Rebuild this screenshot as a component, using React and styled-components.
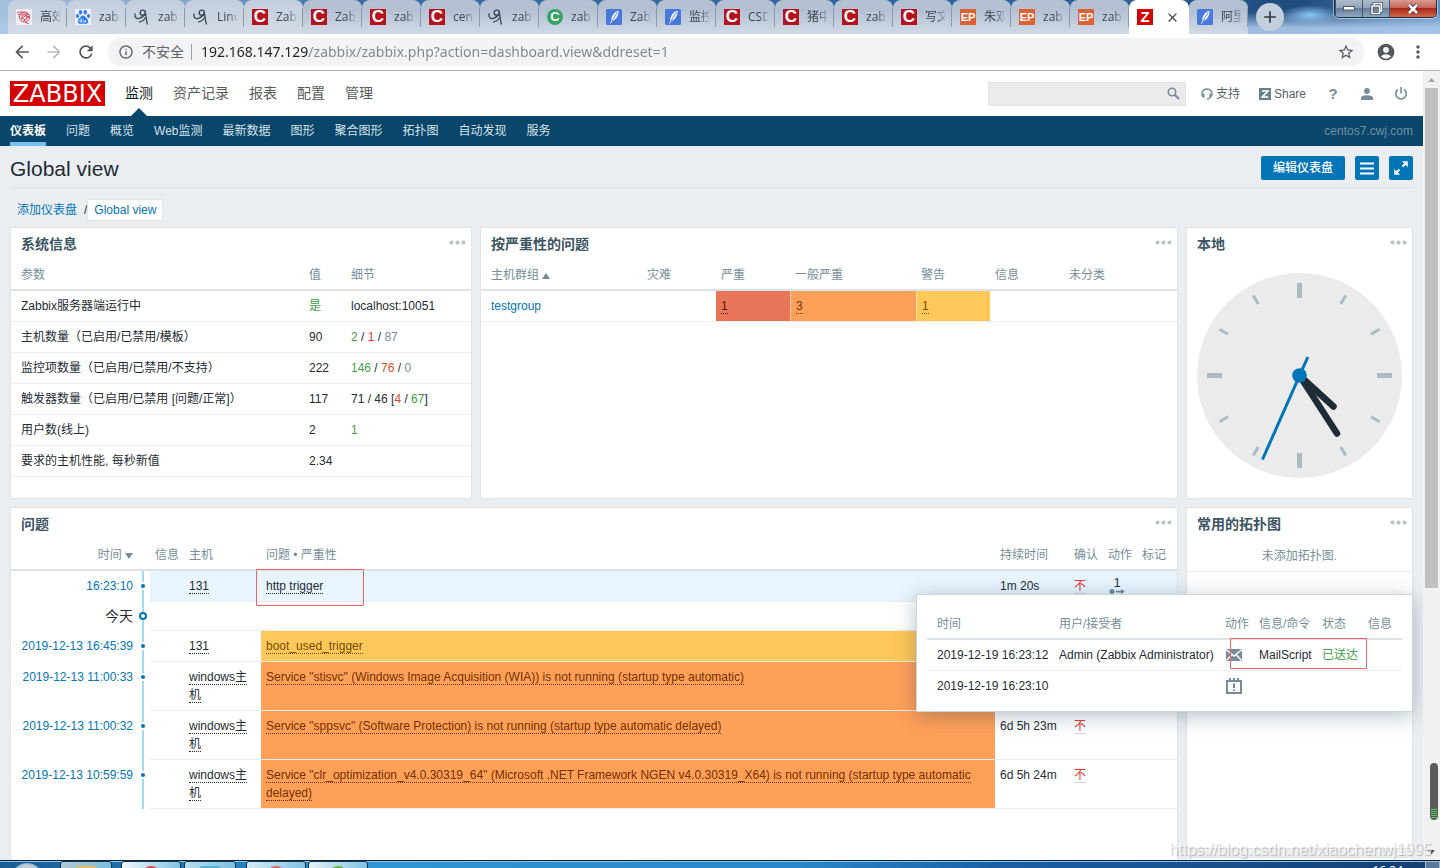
import React from "react";
import styled, { createGlobalStyle, css } from "styled-components";
import {
  MdArrowBack,
  MdArrowForward,
  MdRefresh,
  MdInfoOutline,
  MdStarBorder,
  MdAccountCircle,
  MdMoreVert,
  MdAdd,
  MdClose,
} from "react-icons/md";

const GlobalStyle = createGlobalStyle`
  * {
    box-sizing: border-box;
  }
  body {
    margin: 0;
    overflow: hidden;
    background: #ebeef0;
    color: #1f2c33;
    font: 12px/18px "Liberation Sans", "Noto Sans CJK SC", sans-serif;
  }
  button, input {
    font: inherit;
    color: inherit;
    margin: 0;
    padding: 0;
    border: 0;
    background: none;
  }
  a {
    color: inherit;
    text-decoration: none;
  }
`;

const uiFont = '"Open Sans", "Noto Sans CJK SC", sans-serif';

const Screen = styled.div`
  display: flex;
  flex-direction: column;
  height: 100vh;
  position: relative;
  overflow: hidden;
`;

/* ---------- browser ---------- */

const TabStrip = styled.div`
  display: flex;
  flex: none;
  height: 34px;
  padding-left: 8px;
  overflow: hidden;
  background:
    radial-gradient(ellipse 30px 10px at 1310px 15px, #8cc4f2, transparent),
    linear-gradient(to bottom, transparent 0, transparent 12px, rgba(172, 203, 236, 0.9) 28px),
    linear-gradient(to right, #a3bfdd 0, #7fa3cc 200px, #3a6ba8 340px, #2b5f9c 1100px, #1f4a7c 1300px, #5f8fc0 1440px);
`;

const Tab = styled.div`
  position: relative;
  display: flex;
  align-items: center;
  flex: none;
  width: ${(p) => (p.$active ? 60 : 59)}px;
  height: 34px;
  padding: 0 7px 0 8px;
  gap: 8px;
  border-radius: 8px 8px 0 0;
  background: ${(p) =>
    p.$active
      ? "#fff"
      : p.$light
      ? "linear-gradient(#c3cedd, #d3dbe6)"
      : "linear-gradient(#b3c1d3 10px, #d2dae6)"};

  ${(p) =>
    !p.$active &&
    css`
      &::after {
        content: "";
        position: absolute;
        right: 0;
        top: 8px;
        width: 1px;
        height: 19px;
        background: #8f9bab;
      }
    `}
`;

const TabTitle = styled.span`
  flex: 1;
  overflow: hidden;
  white-space: nowrap;
  font: 12px/18px ${uiFont};
  color: #3f4650;
  -webkit-mask-image: linear-gradient(to right, #000 55%, rgba(0, 0, 0, 0.2));
  mask-image: linear-gradient(to right, #000 55%, rgba(0, 0, 0, 0.2));
`;

const Favicon = styled.span`
  flex: none;
  display: flex;
  align-items: center;
  justify-content: center;
  width: 16px;
  height: 16px;
  overflow: hidden;
  color: #fff;
  background: ${(p) => p.$bg || "transparent"};
  border-radius: ${(p) => p.$radius || 0}px;
  font: bold ${(p) => p.$size || 14}px/16px "Liberation Sans", sans-serif;
`;

const CloseTab = styled.button`
  display: flex;
  margin-left: 4px;
  font-size: 15px;
  color: #45494d;
`;

const NewTab = styled.button`
  display: flex;
  align-items: center;
  justify-content: center;
  flex: none;
  width: 28px;
  height: 28px;
  margin: 3px 0 0 8px;
  border-radius: 50%;
  background: #c3cfdd;
  font-size: 20px;
  color: #35393d;
`;

const WindowButtons = styled.div`
  display: flex;
  flex: none;
  height: 18px;
  margin: 0 3px 0 auto;
  border: 1px solid #1c2f47;
  border-top: 0;
  border-radius: 0 0 5px 5px;
  overflow: hidden;
  box-shadow: 0 0 0 1px rgba(255, 255, 255, 0.5);
`;

const WindowButton = styled.button`
  display: flex;
  align-items: center;
  justify-content: center;
  width: ${(p) => (p.$close ? 47 : 27)}px;
  border-left: 1px solid #41566e;
  background: ${(p) =>
    p.$close
      ? "linear-gradient(#d89a8e, #c4675a 45%, #a92a17 50%, #d2664a)"
      : "linear-gradient(#aebdcd, #93a5b9 45%, #65809d 50%, #90a8c0)"};
`;

const AddressRow = styled.div`
  display: flex;
  align-items: center;
  flex: none;
  height: 37px;
  padding: 0 12px 1px 8px;
  background: #fff;
  border-bottom: 1px solid #b3b3b3;
`;

const BrowserButton = styled.button`
  display: flex;
  align-items: center;
  justify-content: center;
  width: ${(p) => p.$w || 32}px;
  height: 28px;
  font-size: 20px;
  color: ${(p) => (p.$off ? "#b9bbbe" : "#54585c")};
`;

const NavButtons = styled.div`
  display: flex;
  margin: 0 6px 0 -2px;
`;

const AddressPill = styled.label`
  display: flex;
  align-items: center;
  flex: 1;
  height: 28px;
  padding: 0 8px 0 10px;
  border-radius: 14px;
  background: #f1f3f4;
  color: #5f6368;
  font: 14px/20px ${uiFont};

  > svg {
    font-size: 16px;
    margin-right: 8px;
  }
`;

const Divider = styled.span`
  width: 1px;
  height: 16px;
  margin: 0 9px 0 7px;
  background: #9a9da1;
`;

const UrlInput = styled.input`
  flex: 1;
  min-width: 0;
  outline: none;
  font-family: "Noto Sans", sans-serif;
  color: transparent;
  background: linear-gradient(to right, #202124 108px, #80868b 108px);
  background-clip: text;
  -webkit-background-clip: text;
`;

const Viewport = styled.div`
  display: flex;
  flex: 1;
  min-height: 0;
`;

const Page = styled.div`
  flex: 1;
  min-width: 0;
  overflow: hidden;
`;

const Scrollbar = styled.div`
  display: flex;
  flex-direction: column;
  align-items: center;
  flex: none;
  width: 17px;
  background: #f1f1f1;
`;

const ScrollThumb = styled.div`
  width: 13px;
  height: 500px;
  margin-bottom: auto;
  background: #c1c1c1;
`;

const ScrollArrow = styled.button`
  display: flex;
  align-items: center;
  justify-content: center;
  width: 17px;
  height: 17px;
`;

/* ---------- zabbix header ---------- */

const TopBar = styled.header`
  display: flex;
  align-items: center;
  height: 45px;
  padding: 0 10px;
  background: #fff;
`;

const Logo = styled.a`
  display: flex;
  align-items: center;
  justify-content: center;
  width: 95px;
  height: 25px;
  background: #d40000;
  color: #fff;
  font: 24px/26px "DejaVu Sans", sans-serif;
`;

const TopMenu = styled.nav`
  display: flex;
  align-items: stretch;
  height: 45px;
  gap: 20px;
  margin-left: 20px;
  font-size: 14px;
  line-height: 44px;
`;

const TopLink = styled.a`
  position: relative;
  color: ${(p) => (p.$active ? "#0f1b22" : "#5a5a5a")};

  ${(p) =>
    p.$active &&
    css`
      &::after {
        content: "";
        position: absolute;
        left: 50%;
        bottom: 0;
        margin-left: -8px;
        border: 8px solid transparent;
        border-top: 0;
        border-bottom-color: #0a466a;
      }
    `}
`;

const Search = styled.label`
  display: flex;
  align-items: center;
  width: 198px;
  height: 24px;
  margin: 0 15px 0 auto;
  padding: 0 5px;
  background: #ebebeb;
  border: 1px solid #dfe4e7;

  input {
    flex: 1;
    min-width: 0;
    outline: none;
  }
`;

const ToolLink = styled.a`
  display: flex;
  align-items: center;
  gap: 3px;
  margin-right: ${(p) => p.$gap}px;
  color: #55626a;
`;

const ToolButtons = styled.div`
  display: flex;
  gap: 10px;

  button {
    display: flex;
    align-items: center;
    justify-content: center;
    width: 24px;
    height: 24px;
    color: #768d99;
    font-size: 15px;
    font-weight: bold;
  }
`;

const SubNav = styled.nav`
  display: flex;
  align-items: stretch;
  gap: 20px;
  height: 30px;
  padding: 0 10px;
  background: #0a466a;
  color: #d5e2ea;
  line-height: 30px;
`;

const SubLink = styled.a`
  ${(p) =>
    p.$active &&
    css`
      color: #fff;
      font-weight: bold;
      box-shadow: inset 0 -4px #79bff0;
    `}
`;

const ServerName = styled.span`
  margin-left: auto;
  color: #6f90a2;
`;

/* ---------- dashboard ---------- */

const Main = styled.main`
  padding: 0 10px;
`;

const TitleRow = styled.div`
  display: flex;
  align-items: center;
  gap: 10px;
  padding: 10px 0 7px;
  border-bottom: 1px solid #dfe4e7;

  h1 {
    flex: 1;
    margin: 0;
    font-size: 21px;
    font-weight: normal;
    line-height: 26px;
    height: 24px;
  }
`;

const BlueButton = styled.button`
  display: flex;
  align-items: center;
  justify-content: center;
  width: ${(p) => p.$w || 24}px;
  height: 24px;
  border-radius: 2px;
  background: #0275b8;
  color: #fff;
  font-weight: 500;
`;

const Crumbs = styled.nav`
  display: flex;
  align-items: center;
  gap: 7px;
  height: 22px;
  margin: 11px 0 6px;
  padding-left: 7px;

  a {
    color: #0275b8;
  }
`;

const CurrentCrumb = styled.span`
  a {
    display: block;
    padding: 1px 6px;
    border: 1px solid #dfe4e7;
    background: #fff;
  }
`;

const Slash = styled.span`
  display: flex;
  align-items: center;
`;

const Dashboard = styled.div`
  position: relative;
  display: grid;
  grid-template-columns: 462fr 698fr 227fr;
  grid-template-rows: 272px 342px 272px;
  gap: 8px;
`;

const WidgetBox = styled.section`
  grid-column: ${(p) => p.$col || "auto"};
  grid-row: ${(p) => p.$row || "auto"};
  min-width: 0;
  background: #fff;
  border: 1px solid #dfe4e7;
`;

const WidgetHead = styled.div`
  display: flex;
  height: 32px;
  padding: 0 5px 0 10px;

  h4 {
    flex: 1;
    margin: 0;
    font-size: 14px;
    font-weight: bold;
    line-height: 32px;
    color: #3c5563;
  }

  button {
    display: flex;
    align-items: center;
    height: 28px;
  }
`;

const Table = styled.table`
  width: 100%;
  table-layout: fixed;
  border-collapse: separate;
  border-spacing: 0;

  th, td {
    text-align: left;
    vertical-align: top;
    padding: 6px 5px;
    border-bottom: 1px solid #ebeef0;
  }
  th {
    height: 31px;
    padding: 6px 5px 5px;
    border-bottom: 2px solid #dce2e5;
    font-weight: normal;
    color: #768d99;
    white-space: nowrap;
  }
  th:first-child, td:first-child {
    padding-left: 10px;
  }
`;

const Col = styled.col`
  width: ${(p) => (p.$w ? p.$w + "px" : "auto")};
`;

const tones = {
  green: "#429e47",
  red: "#e33734",
  orange: "#d64e1f",
  grey: "#768d99",
};

const Tone = styled.span`
  color: ${(p) => tones[p.$c]};
`;

const BlueLink = styled.a`
  color: #0275b8;
`;

const severities = {
  high: ["#e97659", "#52190b"],
  average: ["#ffa059", "#733100"],
  warning: ["#ffc859", "#734d00"],
};

const SeverityCell = styled.td`
  position: relative;
  ${(p) =>
    p.$level &&
    css`
      background: ${severities[p.$level][0]};
      color: ${severities[p.$level][1]};
    `}
  ${(p) => p.$dotted && "border-left: 1px dotted #fff;"}
`;

const ActionLink = styled.a`
  border-bottom: 1px dotted currentColor;
`;

const AckLink = styled.a`
  color: #e33734;
  border-bottom: 1px solid #ccd5d9;
`;

const ProblemTable = styled(Table)`
  th:first-child, td:first-child {
    padding-left: 5px;
    text-align: right;
  }
  td:first-child, td:nth-child(2) {
    border-bottom: 0;
    background-color: #fff;
  }
`;

const ProblemRow = styled.tr`
  background: ${(p) => (p.$hover ? "#e8f5ff" : "transparent")};
`;

const TimelineCell = styled.td`
  && {
    padding: ${(p) => (p.$day ? "10px 0 0 1px" : "13px 0 0 3px")};
    background: linear-gradient(#a8d8f0, #a8d8f0) 4px 0 / 2px 100% no-repeat;
  }
`;

const Dot = styled.span`
  display: block;
  width: 4px;
  height: 4px;
  border-radius: 50%;
  background: #0275b8;
  box-shadow: 0 0 0 2px #fff;
`;

const DayDot = styled.span`
  display: block;
  width: 8px;
  height: 8px;
  border-radius: 50%;
  border: 2px solid #0275b8;
  background: #fff;
`;

const DayLabel = styled.td`
  && {
    padding-top: 5px;
    padding-bottom: 6px;
    font-size: 14px;
  }
`;

const DayFill = styled.td`
  && {
    padding: 0;
  }
`;

const ActionIcon = styled.button`
  display: flex;
  flex-direction: column;
  align-items: center;
  justify-content: space-between;
  width: 18px;
  height: 18px;
  line-height: 12px;
`;

const EmptyNote = styled.p`
  margin: 0;
  padding: 7px 10px 6px;
  text-align: center;
  color: #768d99;
  border-bottom: 1px solid #ebeef0;
`;

const ClockBody = styled.div`
  display: flex;
  justify-content: center;
  padding-top: 13px;
`;

const Popup = styled.div`
  position: absolute;
  right: 0;
  top: 367px;
  width: 497px;
  padding: 14px 10px 10px;
  background: #fff;
  border: 1px solid #ccd5d9;
  box-shadow: 0 4px 20px rgba(0, 45, 75, 0.3);

  td {
    white-space: nowrap;
  }
  tr:last-child td {
    border-bottom: 0;
  }
  svg {
    display: block;
  }
`;

const MarkedCell = styled.td`
  position: relative;
`;

// red frame drawn over a cell
const Mark = styled.span`
  position: absolute;
  left: ${(p) => p.$x}px;
  top: -2px;
  width: ${(p) => p.$w}px;
  height: ${(p) => p.$h}px;
  border: 1px solid #f2605f;
  border-radius: 1px;
  pointer-events: none;
`;

/* ---------- desktop ---------- */

const Taskbar = styled.footer`
  display: flex;
  flex: none;
  height: 8px;
  padding-left: 10px;
  overflow: hidden;
  border-top: 1px solid #0c2238;
  box-shadow: inset 0 1px #8cc3ea;
  background: linear-gradient(to right, #1a5d94, #2f95d3 380px, #2a86c8 800px, #1b5fa5 1000px, #143e70);
`;

const StartOrb = styled.button`
  flex: none;
  width: 34px;
  height: 34px;
  margin: 2px 16px 0 0;
  border-radius: 50%;
  border: 1px solid #8fb7d2;
  background: radial-gradient(circle at 50% 20%, #d4dde3, #5c7f96);
`;

const TaskButton = styled.button`
  display: flex;
  justify-content: center;
  flex: none;
  width: ${(p) => p.$w}px;
  height: 34px;
  margin-right: ${(p) => p.$gap}px;
  padding-top: 4px;
  border: 1px solid #12344f;
  border-radius: 3px;
  background: linear-gradient(110deg, ${(p) => p.$from}, #6fbbe0);

  span {
    width: 20px;
    height: 20px;
    border-radius: ${(p) => (p.$round ? 50 : 10)}%;
    background: ${(p) => p.$icon};
  }
`;

const TaskClock = styled.span`
  margin: 1px 22px 0 auto;
  color: #fff;
  font: 12px/18px ${uiFont};
`;

const DesktopPeek = styled.button`
  width: 15px;
  height: 34px;
  border: 1px solid #a5bdd4;
  background: #5b7a9b;
`;

const Watermark = styled.span`
  position: absolute;
  right: 8px;
  bottom: 8px;
  color: rgba(255, 255, 255, 0.7);
  text-shadow: 1px 1px 1px rgba(0, 0, 0, 0.25);
  font-size: 16px;
  line-height: 20px;
`;

const Capsule = styled.span`
  position: absolute;
  right: 2px;
  bottom: 48px;
  display: flex;
  align-items: flex-end;
  justify-content: center;
  width: 8px;
  height: 57px;
  padding-bottom: 2px;
  border-radius: 4px;
  background: #5c5c5c;

  &::after {
    content: "";
    width: 6px;
    height: 9px;
    background: repeating-linear-gradient(#5ccf6a 0 1px, #3f5a42 1px 2px);
  }
`;

const KnotIcon = () => (
  <svg width="16" height="16" viewBox="0 0 16 16">
    <rect width="16" height="16" fill="#eef0f4" />
    <g fill="none" stroke="#d9475a">
      <circle cx="8.500" cy="8" r="5" />
      <circle cx="8.500" cy="8" r="2.500" />
      <path d="M1 4c3-2 8-1 12 2M2 6c3-2 8-1 11 3M5 10l7-5M7 13l6-6M9 13l4 2" />
    </g>
  </svg>
);

const PawIcon = () => (
  <svg width="16" height="16" viewBox="0 0 16 16">
    <rect width="16" height="16" fill="#eef0f4" />
    <g fill="#2f7df0">
      <ellipse cx="5.500" cy="3.300" rx="1.700" ry="2.300" />
      <ellipse cx="10.300" cy="3.300" rx="1.700" ry="2.300" />
      <ellipse cx="2.500" cy="7" rx="1.600" ry="2.100" />
      <ellipse cx="13.500" cy="7" rx="1.600" ry="2.100" />
      <path d="M8 6.500c2 0 2.500 2 4 3.300 2 1.700 1.500 5.200-1.500 5.200-1 0-1.500-.4-2.500-.4S6.500 15 5.500 15c-3 0-3.500-3.500-1.500-5.200C5.500 8.500 6 6.500 8 6.500z" />
    </g>
    <path d="M6.800 9.500v3.500h-1.200a1 1 0 010-2h1.200M8.800 11v1.500q0 .6.700.6h1.200V11" fill="none" stroke="#fff" strokeWidth=".8" />
  </svg>
);

const ScribbleIcon = () => (
  <svg width="16" height="16" viewBox="0 0 16 16" fill="none" stroke="#3f4a58" strokeWidth="1.400">
    <circle cx="8.800" cy="3.700" r="2.600" />
    <path d="M1 4.500c-.5 4 1.500 6 4.500 4.800 3-1.200 5-2.800 5.700-5.300M11.200 3.500c1 2 .8 8 2.300 12" />
    <path d="M11.500 8.500c-2 3.500-4.500 4.500-6.500 4.300" strokeWidth="1.200" />
  </svg>
);

const FeatherIcon = () => (
  <svg width="16" height="16" viewBox="0 0 16 16">
    <rect width="16" height="16" rx="1.500" fill="#4878dc" />
    <path d="M12.500 1.500C8 3 5 7 5.200 12l-1.200 2.500.8.200L6.200 12C10.500 11 13 6 12.500 1.500z" fill="#e8f0fb" />
    <path d="M11.500 3L6 12" stroke="#4878dc" strokeWidth=".7" />
  </svg>
);

const tabIcons = {
  knot: <KnotIcon />,
  paw: <PawIcon />,
  scribble: <ScribbleIcon />,
  feather: <FeatherIcon />,
  csdn: <Favicon $bg="#b5121f" $size={17}>C</Favicon>,
  green: <Favicon $bg="#35a566" $radius={8} $size={13}>C</Favicon>,
  ep: <Favicon $bg="#dc6236" $size={11}>EP</Favicon>,
};

const tabs = [
  ["knot", "高效"],
  ["paw", "zab"],
  ["scribble", "zab"],
  ["scribble", "Linu"],
  ["csdn", "Zab"],
  ["csdn", "Zab"],
  ["csdn", "zab"],
  ["csdn", "cen"],
  ["scribble", "zab"],
  ["green", "zab"],
  ["feather", "Zab"],
  ["feather", "监控"],
  ["csdn", "CSD"],
  ["csdn", "猪中"],
  ["csdn", "zab"],
  ["csdn", "写文"],
  ["ep", "朱双"],
  ["ep", "zab"],
  ["ep", "zab"],
];

const Browser = () => (
  <>
    <TabStrip>
      {tabs.map(([icon, title], i) => (
        <Tab key={i} $light={i < 5}>
          {tabIcons[icon]}
          <TabTitle>{title}</TabTitle>
        </Tab>
      ))}
      <Tab $active>
        <Favicon $bg="#d40000" $size={15}>Z</Favicon>
        <CloseTab aria-label="关闭"><MdClose /></CloseTab>
      </Tab>
      <Tab>
        {tabIcons.feather}
        <TabTitle>阿里</TabTitle>
      </Tab>
      <NewTab aria-label="新标签页"><MdAdd /></NewTab>
      <WindowButtons>
        <WindowButton aria-label="最小化">
          <svg width="12" height="5"><rect x=".5" y=".5" width="11" height="3.500" fill="#fff" stroke="#4a5568" /></svg>
        </WindowButton>
        <WindowButton aria-label="还原">
          <svg width="13" height="13" viewBox="0 0 13 13" fill="none">
            <path d="M4 3V1.500h7.500V9H10M2 4h7.500v7.500H2z" stroke="#3d4a5c" strokeWidth="3" />
            <path d="M4 3V1.500h7.500V9H10M2 4h7.500v7.500H2z" stroke="#fff" strokeWidth="1.500" />
          </svg>
        </WindowButton>
        <WindowButton $close aria-label="关闭窗口">
          <svg width="14" height="12" viewBox="0 0 14 12">
            <path d="M3 2l8 8M11 2l-8 8" stroke="#4b3340" strokeWidth="4.500" />
            <path d="M3 2l8 8M11 2l-8 8" stroke="#fff" strokeWidth="2.500" />
          </svg>
        </WindowButton>
      </WindowButtons>
    </TabStrip>
    <AddressRow>
      <NavButtons>
        <BrowserButton aria-label="后退"><MdArrowBack /></BrowserButton>
        <BrowserButton aria-label="前进" $off><MdArrowForward /></BrowserButton>
        <BrowserButton aria-label="刷新"><MdRefresh /></BrowserButton>
      </NavButtons>
      <AddressPill>
        <MdInfoOutline />
        不安全
        <Divider />
        <UrlInput defaultValue="192.168.147.129/zabbix/zabbix.php?action=dashboard.view&ddreset=1" />
        <BrowserButton $w={20} aria-label="收藏"><MdStarBorder size={18} /></BrowserButton>
      </AddressPill>
      <BrowserButton $w={44} aria-label="用户"><MdAccountCircle /></BrowserButton>
      <BrowserButton $w={20} aria-label="菜单"><MdMoreVert /></BrowserButton>
    </AddressRow>
  </>
);

const subLinks = ["问题", "概览", "Web监测", "最新数据", "图形", "聚合图形", "拓扑图", "自动发现", "服务"];

const Header = () => (
  <>
    <TopBar>
      <Logo href="#">ZABBIX</Logo>
      <TopMenu>
        <TopLink href="#" $active>监测</TopLink>
        {["资产记录", "报表", "配置", "管理"].map((t) => (
          <TopLink href="#" key={t}>{t}</TopLink>
        ))}
      </TopMenu>
      <Search>
        <input type="text" aria-label="搜索" />
        <svg width="13" height="13" viewBox="0 0 13 13" fill="none" stroke="#768d99">
          <circle cx="5" cy="5" r="3.700" strokeWidth="1.600" />
          <path d="M7.700 7.700l4.300 4.300" strokeWidth="2" />
        </svg>
      </Search>
      <ToolLink href="#" $gap={19}>
        <svg width="12" height="12" viewBox="0 0 12 12">
          <path d="M2.500 9C-.5 6.500 1 1 6 1s6.500 5.500 3.500 8c-.8 1.500-1.800 2-3.500 2" fill="none" stroke="#768d99" strokeWidth="1.400" />
          <path d="M1.500 5.500h2v4.500H2.300zM10.500 5.500h-2v4.500h1.200z" fill="#768d99" />
        </svg>
        支持
      </ToolLink>
      <ToolLink href="#" $gap={15}>
        <svg width="12" height="12" viewBox="0 0 12 12">
          <rect width="12" height="12" fill="#69808d" />
          <path d="M3 3h6L3.300 9h6" fill="none" stroke="#fff" strokeWidth="1.600" />
        </svg>
        Share
      </ToolLink>
      <ToolButtons>
        <button aria-label="帮助">?</button>
        <button aria-label="用户">
          <svg width="12" height="12" viewBox="0 0 12 12" fill="currentColor">
            <circle cx="6" cy="3" r="2.900" />
            <path d="M0 12v-2c0-2 3-2.800 6-2.800s6 .8 6 2.800v2z" />
          </svg>
        </button>
        <button aria-label="退出">
          <svg width="12" height="13" viewBox="0 0 12 13" fill="none" stroke="currentColor" strokeWidth="1.600">
            <path d="M3 2.500a5.200 5.200 0 106 0M6 0v6.500" />
          </svg>
        </button>
      </ToolButtons>
    </TopBar>
    <SubNav>
      <SubLink href="#" $active>仪表板</SubLink>
      {subLinks.map((t) => (
        <SubLink href="#" key={t}>{t}</SubLink>
      ))}
      <ServerName>centos7.cwj.com</ServerName>
    </SubNav>
  </>
);

const Widget = ({ title, col, row, children }) => (
  <WidgetBox $col={col} $row={row}>
    <WidgetHead>
      <h4>{title}</h4>
      <button aria-label="更多">
        <svg width="17" height="5" fill="#b6c3c9">
          <circle cx="2.500" cy="2.500" r="2" />
          <circle cx="8.500" cy="2.500" r="2" />
          <circle cx="14.500" cy="2.500" r="2" />
        </svg>
      </button>
    </WidgetHead>
    {children}
  </WidgetBox>
);

const Columns = ({ widths }) => (
  <colgroup>
    {widths.map((w, i) => <Col key={i} $w={w} />)}
  </colgroup>
);

const systemRows = [
  ["Zabbix服务器端运行中", <Tone $c="green">是</Tone>, "localhost:10051"],
  ["主机数量（已启用/已禁用/模板）", "90", <><Tone $c="green">2</Tone> / <Tone $c="red">1</Tone> / <Tone $c="grey">87</Tone></>],
  ["监控项数量（已启用/已禁用/不支持）", "222", <><Tone $c="green">146</Tone> / <Tone $c="orange">76</Tone> / <Tone $c="grey">0</Tone></>],
  ["触发器数量（已启用/已禁用 [问题/正常]）", "117", <>71 / 46 [<Tone $c="orange">4</Tone> / <Tone $c="green">67</Tone>]</>],
  ["用户数(线上)", "2", <Tone $c="green">1</Tone>],
  ["要求的主机性能, 每秒新值", "2.34", ""],
];

const SystemInfo = () => (
  <Widget title="系统信息">
    <Table>
      <Columns widths={[0, 42, 125]} />
      <thead>
        <tr><th>参数</th><th>值</th><th>细节</th></tr>
      </thead>
      <tbody>
        {systemRows.map(([name, value, detail]) => (
          <tr key={name}>
            <td>{name}</td>
            <td>{value}</td>
            <td>{detail}</td>
          </tr>
        ))}
      </tbody>
    </Table>
  </Widget>
);

const SeverityProblems = () => (
  <Widget title="按严重性的问题">
    <Table>
      <Columns widths={[0, 74, 74, 126, 74, 74, 113]} />
      <thead>
        <tr>
          <th>
            主机群组{" "}
            <svg width="8" height="6"><path d="M0 6h8L4 0z" fill="#768d99" /></svg>
          </th>
          <th>灾难</th><th>严重</th><th>一般严重</th><th>警告</th><th>信息</th><th>未分类</th>
        </tr>
      </thead>
      <tbody>
        <tr>
          <td><BlueLink href="#">testgroup</BlueLink></td>
          <td />
          <SeverityCell $level="high"><ActionLink href="#">1</ActionLink></SeverityCell>
          <SeverityCell $level="average" $dotted><ActionLink href="#">3</ActionLink></SeverityCell>
          <SeverityCell $level="warning" $dotted><ActionLink href="#">1</ActionLink></SeverityCell>
          <td />
          <td />
        </tr>
      </tbody>
    </Table>
  </Widget>
);

const ticks = [0, 1, 2, 3, 4, 5, 6, 7, 8, 9, 10, 11];

const Clock = () => (
  <Widget title="本地">
    <ClockBody>
      <svg width="205" height="205" viewBox="-102.5 -102.5 205 205">
        <circle r="102.500" fill="#ebebeb" />
        {ticks.map((n) => (
          <path
            key={n}
            d={n % 3 ? "M0-92.500V-82.500" : "M0-92.500V-77.500"}
            stroke="#acbbc2"
            strokeWidth={n % 3 ? 3 : 5}
            transform={`rotate(${n * 30})`}
          />
        ))}
        <g stroke="#1f2c33" strokeWidth="6.500" strokeLinecap="round">
          <path d="M0 0L34 31" />
          <path d="M0 0L37.500 58" />
        </g>
        <path d="M8.300-18.500L-37 84" stroke="#0275b8" strokeWidth="3" />
        <circle r="7.300" fill="#0275b8" />
      </svg>
    </ClockBody>
  </Widget>
);

const problems = [
  { time: "16:23:10", host: "131", name: "http trigger", age: "1m 20s", actions: 1, hover: true },
  { day: "今天" },
  { time: "2019-12-13 16:45:39", host: "131", name: "boot_used_trigger", level: "warning" },
  { time: "2019-12-13 11:00:33", host: "windows主机", name: 'Service "stisvc" (Windows Image Acquisition (WIA)) is not running (startup type automatic)', level: "average" },
  { time: "2019-12-13 11:00:32", host: "windows主机", name: 'Service "sppsvc" (Software Protection) is not running (startup type automatic delayed)', level: "average", age: "6d 5h 23m" },
  { time: "2019-12-13 10:59:59", host: "windows主机", name: 'Service "clr_optimization_v4.0.30319_64" (Microsoft .NET Framework NGEN v4.0.30319_X64) is not running (startup type automatic delayed)', level: "average", age: "6d 5h 24m" },
];

const Problems = () => (
  <Widget title="问题" col="1 / 3" row="2 / 4">
    <ProblemTable>
      <Columns widths={[127, 12, 34, 77, 0, 74, 34, 34, 40]} />
      <thead>
        <tr>
          <th>
            时间{" "}
            <svg width="8" height="6"><path d="M0 0h8L4 6z" fill="#768d99" /></svg>
          </th>
          <th />
          <th>信息</th><th>主机</th><th>问题 • 严重性</th><th>持续时间</th><th>确认</th><th>动作</th><th>标记</th>
        </tr>
      </thead>
      <tbody>
        {problems.map((p) =>
          p.day ? (
            <tr key={p.day}>
              <DayLabel>{p.day}</DayLabel>
              <TimelineCell $day><DayDot /></TimelineCell>
              <DayFill colSpan={7} />
            </tr>
          ) : (
            <ProblemRow key={p.time} $hover={p.hover}>
              <td><BlueLink href="#">{p.time}</BlueLink></td>
              <TimelineCell><Dot /></TimelineCell>
              <td />
              <td><ActionLink href="#">{p.host}</ActionLink></td>
              <SeverityCell $level={p.level}>
                <ActionLink href="#">{p.name}</ActionLink>
                {p.hover && <Mark $x={-5} $w={108} $h={37} />}
              </SeverityCell>
              <td>{p.age}</td>
              <td>{p.age && <AckLink href="#">不</AckLink>}</td>
              <td>
                {p.actions && (
                  <ActionIcon>
                    {p.actions}
                    <svg width="16" height="6" viewBox="0 0 16 6" fill="#768d99">
                      <circle cx="3" cy="2.500" r="2.500" />
                      <path d="M7 1.700h5V0l4 2.500L12 5V3.400H7z" />
                    </svg>
                  </ActionIcon>
                )}
              </td>
              <td />
            </ProblemRow>
          )
        )}
      </tbody>
    </ProblemTable>
  </Widget>
);

const ActionPopup = () => (
  <Popup>
    <Table>
      <Columns widths={[127, 166, 34, 63, 46, 0]} />
      <thead>
        <tr><th>时间</th><th>用户/接受者</th><th>动作</th><th>信息/命令</th><th>状态</th><th>信息</th></tr>
      </thead>
      <tbody>
        <tr>
          <td>2019-12-19 16:23:12</td>
          <td>Admin (Zabbix Administrator)</td>
          <td>
            <svg width="18" height="18" viewBox="0 0 18 18">
              <rect x="1" y="3" width="16" height="12" fill="#768d99" />
              <path d="M1 3.500l8 6.500 8-6.500M1.500 14.500L6.500 9M16.500 14.500L11.500 9" fill="none" stroke="#fff" strokeWidth="1.400" />
            </svg>
          </td>
          <MarkedCell>
            MailScript
            <Mark $x={-24} $w={137} $h={31} />
          </MarkedCell>
          <td><Tone $c="green">已送达</Tone></td>
          <td />
        </tr>
        <tr>
          <td>2019-12-19 16:23:10</td>
          <td />
          <td>
            <svg width="18" height="18" viewBox="0 0 18 18" fill="none" stroke="#768d99" strokeWidth="2">
              <path d="M2 4h14v12H2zM5 1v3M9 1v3M13 1v3M9 6.500v4.500M9 12.500v1.500" />
            </svg>
          </td>
          <td /><td /><td />
        </tr>
      </tbody>
    </Table>
  </Popup>
);

export default function App() {
  return (
    <Screen>
      <GlobalStyle />
      <Browser />
      <Viewport>
        <Page>
          <Header />
          <Main>
            <TitleRow>
              <h1>Global view</h1>
              <BlueButton $w={84}>编辑仪表盘</BlueButton>
              <BlueButton aria-label="列表">
                <svg width="14" height="13" stroke="#fff" strokeWidth="2"><path d="M0 1.500h14M0 6.500h14M0 11.500h14" /></svg>
              </BlueButton>
              <BlueButton aria-label="全屏">
                <svg width="16" height="16" viewBox="0 0 16 16" fill="#fff" stroke="#fff">
                  <path d="M9.500 1.500h5v5zM1.500 9.500v5h5z" strokeWidth=".5" />
                  <path d="M9.500 6.500l3-3M3.500 12.500l3-3" strokeWidth="2" />
                </svg>
              </BlueButton>
            </TitleRow>
            <Crumbs>
              <a href="#">添加仪表盘</a>
              <Slash>
                /
                <CurrentCrumb><a href="#">Global view</a></CurrentCrumb>
              </Slash>
            </Crumbs>
            <Dashboard>
              <SystemInfo />
              <SeverityProblems />
              <Clock />
              <Problems />
              <Widget title="常用的拓扑图" col="3" row="2">
                <EmptyNote>未添加拓扑图.</EmptyNote>
              </Widget>
              <WidgetBox $col="3" $row="3" />
              <ActionPopup />
            </Dashboard>
          </Main>
        </Page>
        <Scrollbar>
          <ScrollArrow aria-label="向上滚动">
            <svg width="7" height="4"><path d="M0 4h7L3.500 0z" fill="#a3a3a3" /></svg>
          </ScrollArrow>
          <ScrollThumb />
          <ScrollArrow aria-label="向下滚动">
            <svg width="7" height="4"><path d="M0 0h7L3.500 4z" fill="#505050" /></svg>
          </ScrollArrow>
        </Scrollbar>
      </Viewport>
      <Taskbar>
        <StartOrb aria-label="开始" />
        <TaskButton $w={52} $gap={9} $from="#b5c9d2" $icon="#e8bd62"><span /></TaskButton>
        <TaskButton $w={60} $gap={3} $from="#f4f8fb" $icon="#dd4b39" $round><span /></TaskButton>
        <TaskButton $w={52} $gap={10} $from="#b9dfee" $icon="#4fb4cf"><span /></TaskButton>
        <TaskButton $w={60} $gap={2} $from="#d9ecf5" $icon="#e2694a" $round><span /></TaskButton>
        <TaskButton $w={60} $gap={0} $from="#e6f3f3" $icon="#62bb3a" $round><span /></TaskButton>
        <TaskClock>16:24</TaskClock>
        <DesktopPeek aria-label="显示桌面" />
      </Taskbar>
      <Watermark>https://blog.csdn.net/xiaochenwj1995</Watermark>
      <Capsule />
    </Screen>
  );
}
